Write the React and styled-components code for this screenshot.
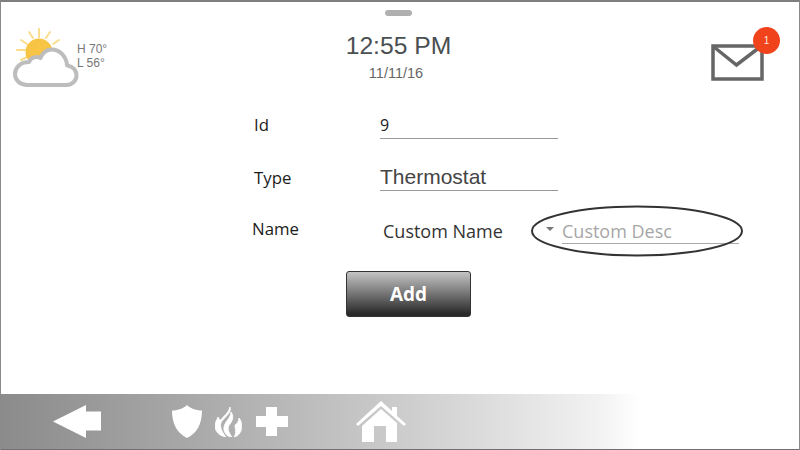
import React from 'react'
import styled, { createGlobalStyle } from 'styled-components'

const GlobalStyle = createGlobalStyle`
  html, body { margin: 0; padding: 0; background: #fff; }
`
const Screen = styled.div`
  box-sizing: border-box;
  width: 800px;
  height: 450px;
  display: flex;
  flex-direction: column;
  border-top: 2px solid #7f7f7f;
  border-left: 1px solid #8a8a8a;
  border-right: 1px solid #8a8a8a;
  background: #fff;
  overflow: hidden;
`
const Header = styled.div`
  height: 94px;
  flex: none;
  display: grid;
  grid-template-columns: 1fr 200px 1fr;
`
const WeatherBox = styled.div`
  display: flex;
  align-items: flex-start;
  padding: 24px 0 0 11px;
`
const WeatherText = styled.div`
  margin: 16px 0 0 -3px;
  font: 12px/14px "Liberation Sans", Arial, sans-serif;
  color: #777;
`
const Center = styled.div`
  display: flex;
  flex-direction: column;
  align-items: center;
  padding: 8px 3px 0 0;
`
const Handle = styled.div`
  width: 27px;
  height: 6px;
  border-radius: 3px;
  background: #b0b0b0;
`
const Time = styled.div`
  margin-top: 16px;
  font: 24.7px/28px "Liberation Sans", Arial, sans-serif;
  color: #4a4f52;
`
const DateText = styled.div`
  margin: 6px 5px 0 0;
  font: 14.5px/15px "Liberation Sans", Arial, sans-serif;
  color: #666;
`
const MailBox = styled.div`
  display: flex;
  justify-content: flex-end;
  padding: 42px 34px 0 0;
`
const Mail = styled.div`
  position: relative;
  width: 54px;
  height: 38px;
`
const Badge = styled.div`
  position: absolute;
  top: -17px;
  right: -15px;
  width: 27px;
  height: 27px;
  border-radius: 50%;
  background: #f0431c;
  color: #fde3d8;
  font: 10px/27px "Liberation Sans", Arial, sans-serif;
  text-align: center;
`
const Main = styled.div`
  flex: 1;
  display: flex;
  flex-direction: column;
  padding: 2px 0 0 251px;
`
const Row = styled.div`
  display: flex;
  align-items: flex-end;
  height: ${p => p.$h}px;
`
const Label = styled.div`
  width: ${p => 128 - (p.$shift ?? 2)}px;
  margin-left: ${p => p.$shift ?? 2}px;
  padding-bottom: ${p => p.$pad ?? 3}px;
  font: 16.8px/22px "Open Sans", "Noto Sans", sans-serif;
  color: #1c1c1c;
`
const Field = styled.div`
  box-sizing: border-box;
  width: 178px;
  padding: 0 0 ${p => (p.$plain ? 1 : 1)}px 0;
  border-bottom: 1px solid #999;
  font: ${p => p.$plain
    ? '16px/24px "Open Sans", "Noto Sans", sans-serif'
    : '21px/24px "Liberation Sans", Arial, sans-serif'};
  color: ${p => (p.$plain ? '#222' : '#444')};
`
const CustomName = styled.div`
  width: 163px;
  padding: 0 0 0 3px;
  box-sizing: border-box;
  margin-bottom: 1px;
  white-space: nowrap;
  font: 18px/24px "Open Sans", "Noto Sans", sans-serif;
  color: #333;
`
const Select = styled.div`
  position: relative;
  box-sizing: border-box;
  width: 196px;
  display: flex;
  align-items: center;
`
const Caret = styled.div`
  width: 0;
  height: 0;
  margin: 0 8px 5px 3px;
  border-left: 4px solid transparent;
  border-right: 4px solid transparent;
  border-top: 4px solid #777;
`
const SelectValue = styled.div`
  flex: 1;
  border-bottom: 1px solid #aaa;
  white-space: nowrap;
  font: 18px/24px "Open Sans", "Noto Sans", sans-serif;
  color: #a6a6a6;
`
const Ellipse = styled.svg`
  position: absolute;
  left: -13px;
  top: -15px;
`
const ButtonRow = styled.div`
  display: flex;
  padding: 27px 0 0 94px;
`
const AddButton = styled.button`
  width: 125px;
  height: 46px;
  border: 1px solid #333;
  border-radius: 3px;
  padding: 0;
  background: linear-gradient(#c4c4c4, #8c8c8c 35%, #2a2a2a 95%);
  color: #fff;
  font: 700 19px/1 "Open Sans", "Noto Sans", sans-serif;
`
const BottomBar = styled.div`
  box-sizing: border-box;
  flex: none;
  height: 56px;
  margin: 0 -1px;
  display: flex;
  align-items: center;
  border-bottom: 1px solid #707070;
  background: linear-gradient(90deg, #8b8b8b 0%, #a6a6a6 22%, #cccccc 50%, #f2f2f2 75%, #ffffff 80%);
`
const NavIcon = styled.svg`
  flex: none;
  margin-left: ${p => p.$left}px;
  fill: #fff;
`

function WeatherIcon() {
  const rays = [[38, 27, 38, 35], [28, 30, 32, 36], [20, 38, 26, 42], [16, 48, 24, 48], [20, 58, 26, 55], [49, 30, 45, 36], [58, 38, 52, 42]]
  return (
    <svg width="68" height="64" viewBox="11 24 68 64">
      <g stroke="#f9dd8a" strokeWidth="2" strokeLinecap="round">
        {rays.map((r, i) => <line key={i} x1={r[0]} y1={r[1]} x2={r[2]} y2={r[3]} />)}
      </g>
      <circle cx="38" cy="50" r="13.5" fill="#f8c445" />
      <path
        d="M26 83 H65 C71 83 75.5 79 75.5 73.5 C75.5 68 71.5 64 66 63.5 C65.5 54 58 47.5 51 47.5 C46 47.5 42 50 39.5 56 C36 54 30 55 28 60 C19 60 14 66 14 72 C14 78 19 83 26 83 Z"
        fill="#fff"
        stroke="#bdbdbd"
        strokeWidth="4"
        strokeLinejoin="round"
      />
    </svg>
  )
}

export default function App() {
  return (
    <Screen>
      <GlobalStyle />
      <Header>
        <WeatherBox>
          <WeatherIcon />
          <WeatherText>H 70°<br />L 56°</WeatherText>
        </WeatherBox>
        <Center>
          <Handle />
          <Time>12:55 PM</Time>
          <DateText>11/11/16</DateText>
        </Center>
        <MailBox>
          <Mail>
            <svg width="54" height="38" viewBox="0 0 54 38">
              <rect x="2" y="2" width="49" height="33" fill="#fff" stroke="#666" strokeWidth="3.5" />
              <path d="M3 3 L25.5 21 L49 3" fill="none" stroke="#666" strokeWidth="3.5" />
            </svg>
            <Badge>1</Badge>
          </Mail>
        </MailBox>
      </Header>
      <Main>
        <Row $h={41}>
          <Label $pad={3}>Id</Label>
          <Field $plain>9</Field>
        </Row>
        <Row $h={52}>
          <Label $pad={2}>Type</Label>
          <Field>Thermostat</Field>
        </Row>
        <Row $h={53}>
          <Label $shift={0} $pad={4}>Name</Label>
          <CustomName>Custom Name</CustomName>
          <Select>
            <Caret />
            <SelectValue>Custom Desc</SelectValue>
            <Ellipse width="214" height="54" viewBox="0 0 214 54">
              <ellipse cx="107" cy="27" rx="105" ry="24.5" fill="none" stroke="#333" strokeWidth="2" />
            </Ellipse>
          </Select>
        </Row>
        <ButtonRow>
          <AddButton>Add</AddButton>
        </ButtonRow>
      </Main>
      <BottomBar>
        <NavIcon $left={53} width="48" height="33" viewBox="0 0 48 33">
          <path d="M0 16.5 L33 0 V6.5 H48 V25.5 H33 V33 Z" />
        </NavIcon>
        <NavIcon $left={71} width="30" height="33" viewBox="0 0 30 33">
          <path d="M15 0 C19 4 25 5.5 30 5.5 C30 19 25 28 15 33 C5 28 0 19 0 5.5 C5 5.5 11 4 15 0 Z" />
        </NavIcon>
        <NavIcon $left={13} width="27" height="30" viewBox="0 0 27 30" stroke="#fff" strokeWidth="0.8">
          <path d="M15 0 C17 5 11 9 7 14 C4 18 6 24 11 30 C5 29 0 25 0 19 C0 15 2 13 3 10 C4 12 5 13 6 13 C8 9 14 6 15 0 Z" />
          <path d="M16 5 C19 9 18 13 15 17 C12 20 13 25 17 30 C12 30 8 25 9 20 C10 14 16 11 16 5 Z" />
          <path d="M24 11 C27 14 27 20 26 24 C24 28 21 30 19 30 C22 26 20 22 20 18 C22 17 24 14 24 11 Z" />
        </NavIcon>
        <NavIcon $left={14} width="32" height="29" viewBox="0 0 32 29">
          <path d="M10 0 H21 V9 H32 V20 H21 V29 H10 V20 H0 V9 H10 Z" />
        </NavIcon>
        <NavIcon $left={68} width="50" height="41" viewBox="0 0 50 41">
          <path d="M0 23 L25 0 L36 10 V6 H41 V15 L50 23 L48 25 L25 5 L2 25 Z" />
          <path d="M6 25 L25 8 L41 22 V41 H30 V25 H18 V41 H6 Z" />
        </NavIcon>
      </BottomBar>
    </Screen>
  )
}
